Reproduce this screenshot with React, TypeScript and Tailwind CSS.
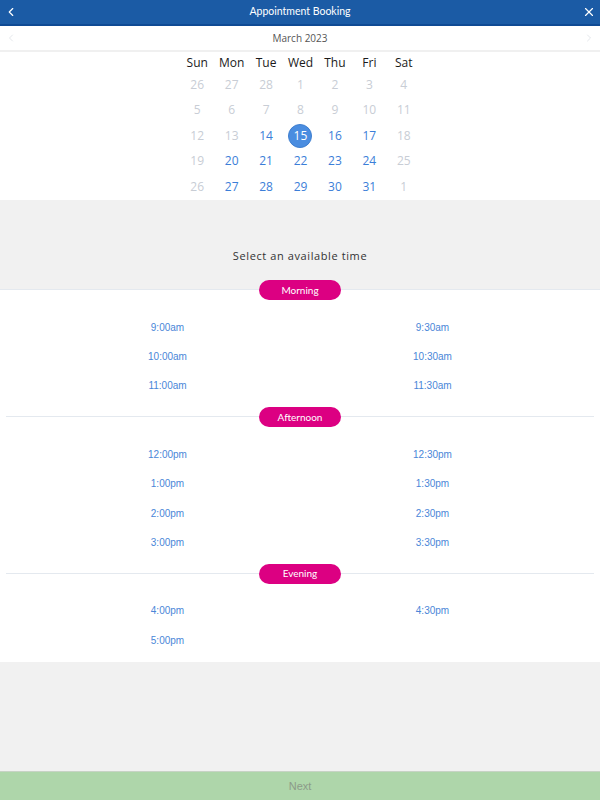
import { ChevronLeft, ChevronRight, X } from "lucide-react";

const weekdays = ["Sun", "Mon", "Tue", "Wed", "Thu", "Fri", "Sat"];

// [label, state] where state: 0 = outside/unavailable, 1 = available, 2 = selected
const weeks: [number, number][][] = [
  [[26, 0], [27, 0], [28, 0], [1, 0], [2, 0], [3, 0], [4, 0]],
  [[5, 0], [6, 0], [7, 0], [8, 0], [9, 0], [10, 0], [11, 0]],
  [[12, 0], [13, 0], [14, 1], [15, 2], [16, 1], [17, 1], [18, 0]],
  [[19, 0], [20, 1], [21, 1], [22, 1], [23, 1], [24, 1], [25, 0]],
  [[26, 0], [27, 1], [28, 1], [29, 1], [30, 1], [31, 1], [1, 0]],
];

const sections = [
  { name: "Morning", times: ["9:00am", "9:30am", "10:00am", "10:30am", "11:00am", "11:30am"] },
  { name: "Afternoon", times: ["12:00pm", "12:30pm", "1:00pm", "1:30pm", "2:00pm", "2:30pm", "3:00pm", "3:30pm"] },
  { name: "Evening", times: ["4:00pm", "4:30pm", "5:00pm"] },
];

function Pill({ label }: { label: string }) {
  return (
    <div className="absolute left-1/2 -translate-x-1/2 -top-[10px] w-[82px] h-[20px] rounded-full bg-[#dc0082] flex items-center justify-center text-white text-[10px] font-['Lato',sans-serif]">
      {label}
    </div>
  );
}

export default function App() {
  return (
    <div className="w-[600px] h-[800px] flex flex-col bg-[#f1f1f1] font-['Open_Sans',sans-serif]">
      <div className="h-[26px] shrink-0 bg-[#1b5ba5] border-b-2 border-[#0f4a94] flex items-center justify-between px-[4px] text-white">
        <ChevronLeft size={14} strokeWidth={2} />
        <div className="text-[10.5px] font-['Lato',sans-serif]">Appointment Booking</div>
        <X size={14} strokeWidth={2} />
      </div>

      <div className="h-[26px] shrink-0 bg-white border-b-2 border-[#f0f0f0] flex items-center justify-between px-[5px]">
        <ChevronLeft size={12} strokeWidth={1} className="text-[#c9ced6]" />
        <div className="text-[10px] text-[#555]">March 2023</div>
        <ChevronRight size={12} strokeWidth={1} className="text-[#c9ced6]" />
      </div>

      <div className="bg-white shrink-0 pb-[0.5px]">
        <div className="w-[241px] ml-[180px] grid grid-cols-7">
          {weekdays.map((d) => (
            <div key={d} className="h-[20px] pt-[1px] flex items-center justify-center text-[12px] text-[#1a1a1a]">
              {d}
            </div>
          ))}
          {weeks.flat().map(([n, s], i) => (
            <div key={i} className="h-[25.5px] flex items-center justify-center">
              {s === 2 ? (
                <div className="w-[24px] h-[24px] rounded-full bg-[#4a8de0] border border-[#3f7fd0] text-white flex items-center justify-center text-[12px]">
                  {n}
                </div>
              ) : (
                <span className={`text-[12px] ${s === 1 ? "text-[#3b7ed8]" : "text-[#c8cdd5]"}`}>{n}</span>
              )}
            </div>
          ))}
        </div>
      </div>

      <div className="h-[89px] shrink-0 flex items-end justify-center pb-[25px]">
        <div className="text-[11px] tracking-[0.6px] text-[#333]">Select an available time</div>
      </div>

      <div className="bg-white shrink-0">
        {sections.map((sec, si) => (
          <div key={sec.name}>
            <div className={`relative border-t border-[#e4e9ef] ${si === 0 ? "" : "mx-[6px]"}`}>
              <Pill label={sec.name} />
            </div>
            <div className={`w-[530px] mx-auto grid grid-cols-2 pt-[22.5px] ${si === 2 ? "pb-[7px]" : "pb-[15.5px]"}`}>
              {sec.times.map((t) => (
                <div key={t} className="h-[29.4px] flex items-center justify-center text-[10px] text-[#4a86d8] font-['Liberation_Sans',Arial,sans-serif]">
                  {t}
                </div>
              ))}
            </div>
          </div>
        ))}
      </div>

      <div className="flex-1" />

      <div className="h-[29px] shrink-0 bg-[#aed6aa] border-t border-[#c7d3c5] flex items-center justify-center text-[11px] text-[#8c9a89] font-['Liberation_Sans',Arial,sans-serif]">
        Next
      </div>
    </div>
  );
}
